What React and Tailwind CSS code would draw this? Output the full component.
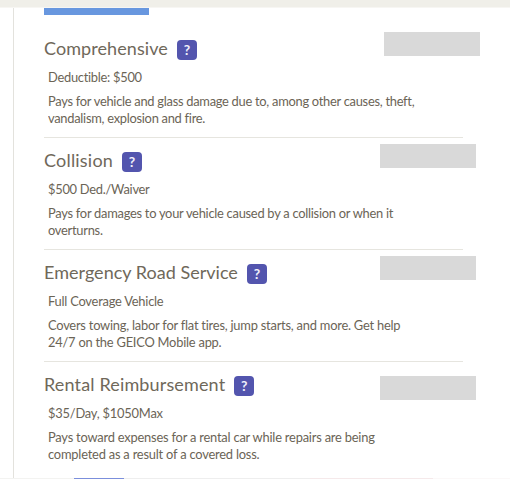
const coverages = [
  {
    title: 'Comprehensive',
    titleSpacing: 'tracking-[0.08px]',
    detail: 'Deductible: $500',
    lines: ['Pays for vehicle and glass damage due to, among other causes, theft,', 'vandalism, explosion and fire.'],
    textSpacing: 'tracking-[-0.3px]',
    price: 'mt-[-7px] mr-[-17px]',
  },
  {
    title: 'Collision',
    titleSpacing: 'tracking-[0.2px]',
    detail: '$500 Ded./Waiver',
    lines: ['Pays for damages to your vehicle caused by a collision or when it', 'overturns.'],
    textSpacing: 'tracking-[-0.29px]',
    price: 'mt-[-7px] mr-[-13px]',
  },
  {
    title: 'Emergency Road Service',
    titleSpacing: 'tracking-[0.02px]',
    detail: 'Full Coverage Vehicle',
    lines: ['Covers towing, labor for flat tires, jump starts, and more. Get help', '24/7 on the GEICO Mobile app.'],
    textSpacing: 'tracking-[-0.25px]',
    price: 'mt-[-7px] mr-[-13px]',
  },
  {
    title: 'Rental Reimbursement',
    titleSpacing: 'tracking-[0.15px]',
    detail: '$35/Day, $1050Max',
    lines: ['Pays toward expenses for a rental car while repairs are being', 'completed as a result of a covered loss.'],
    textSpacing: 'tracking-[-0.23px]',
    price: 'mt-[1px] mr-[-13px]',
  },
];

function Coverage({ title, titleSpacing, detail, lines, textSpacing, price, first }) {
  return (
    <section className={`h-[112px] w-[419px] border-t pt-[13px] ${first ? 'border-transparent' : 'border-[#e6e5df]'}`}>
      <div className="flex h-[20px] items-start">
        <h2 className={`mt-[-1px] text-[18px] leading-[20px] whitespace-nowrap text-[#6f685a] ${titleSpacing}`}>{title}</h2>
        <button className="mt-[0.5px] ml-[9px] flex size-[20px] shrink-0 items-center justify-center rounded-[4px] bg-[#5355ae] text-[14px] leading-none font-bold text-[#f0f0fa]">
          ?
        </button>
        <div className={`ml-auto h-[24px] w-[96px] shrink-0 bg-[#d9d9d9] ${price}`} />
      </div>
      <div className={`ml-[3.5px] origin-left scale-x-[0.92] text-[14px] leading-[17px] whitespace-nowrap ${textSpacing}`}>
        <p className="mt-[9px]">{detail}</p>
        <p className="mt-[7px]">
          {lines[0]}
          <br />
          {lines[1]}
        </p>
      </div>
    </section>
  );
}

export default function App() {
  return (
    <div className="flex h-[479px] w-[510px] flex-col overflow-hidden bg-white font-['Lato',sans-serif] text-[#6b6456]">
      <div className="h-[8px] shrink-0 border-b border-[#f7f6f3] bg-[#f0efe9]" />
      <div className="ml-[13px] flex h-[470px] shrink-0 flex-col border-l border-[#e3e2dd] pl-[30px]">
        <div className="h-[7px] w-[105px] shrink-0 bg-[#6897df]" />
        <div className="mt-[10px]">
          {coverages.map((c, i) => (
            <Coverage key={c.title} {...c} first={i === 0} />
          ))}
        </div>
      </div>
      <div className="flex h-[1px] shrink-0">
        <div className="w-[74px] bg-[#f3f3f1]" />
        <div className="w-[50px] bg-[#7b8fdc]" />
        <div className="w-[186px] bg-[#eeeeee]" />
        <div className="w-[123px] bg-[#f5e9ea]" />
        <div className="grow bg-[#fbf8f8]" />
      </div>
    </div>
  );
}
